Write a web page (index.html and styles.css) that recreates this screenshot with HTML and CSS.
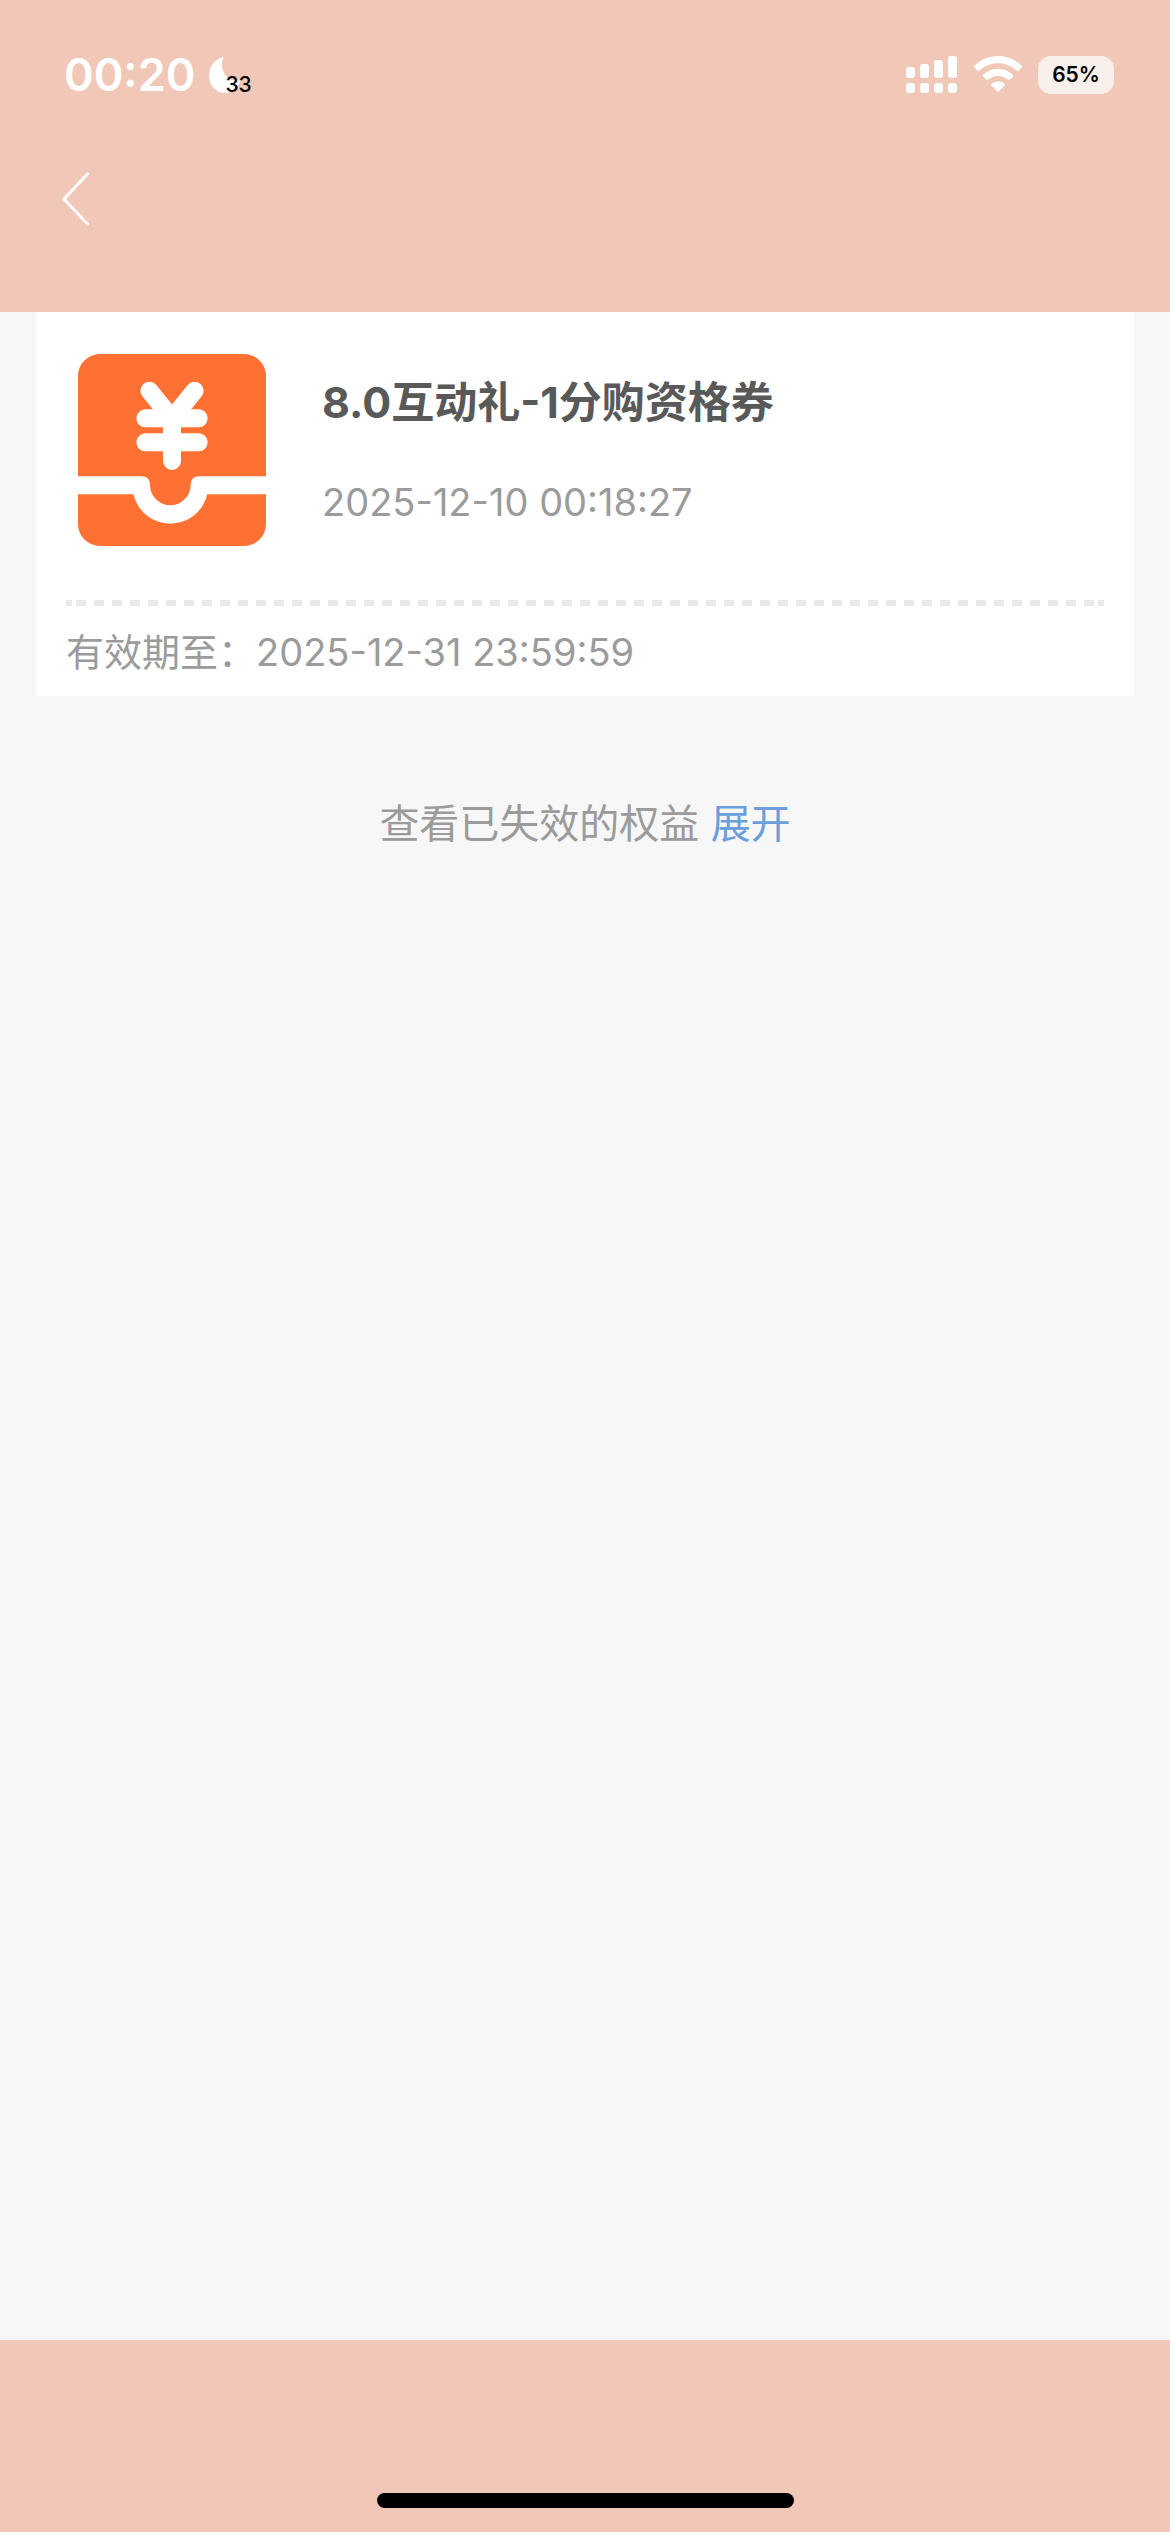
FILE: index.html
```
<!DOCTYPE html>
<html lang="zh-CN">
<head>
    <meta charset="UTF-8">
    <meta name="viewport" content="width=device-width, initial-scale=1.0">
    <title>我的权益</title>
    <link rel="stylesheet" href="styles.css">
</head>
<body>

    <!-- Header -->
    <header class="header">
        <div class="status-bar">
            <div class="status-left">
                <span class="time">00:20</span>
                <span class="focus">
                    <svg class="moon" viewBox="0 0 32 36" aria-hidden="true">
                        <path d="M13.6 0C14.2-.1 14.6.4 14.3 1 12.6 5 12.5 9.500 14 14c2.500 6.500 8.500 10.500 16 9.500l1.500.5C28.500 31 23 36 16 36 7 36 0 28.500 0 18.500 0 10 5.500 2.500 13.600 0z" fill="#fff"/>
                    </svg>
                    <span class="focus-count">33</span>
                </span>
            </div>
            <div class="status-right">
                <svg class="signal" viewBox="0 0 52 38" fill="#fff" aria-hidden="true">
                    <rect x="0" y="11" width="9" height="11" rx="3"/>
                    <rect x="14" y="8" width="9" height="14" rx="3"/>
                    <rect x="28" y="4" width="9" height="18" rx="3"/>
                    <rect x="42" y="0" width="9" height="22" rx="3"/>
                    <rect x="0" y="27" width="9" height="10" rx="3"/>
                    <rect x="14" y="27" width="9" height="10" rx="3"/>
                    <rect x="28" y="27" width="9" height="10" rx="3"/>
                    <rect x="42" y="27" width="9" height="10" rx="3"/>
                </svg>
                <svg class="wifi" viewBox="0 0 48 38" fill="#fff" aria-hidden="true">
                    <path d="M24 0C15 0 7 3.500.6 9.600c-.8.8-.8 1.500 0 2.200l2.700 2.700c.7.700 1.400.7 2.100 0C10.500 9.800 17 7.200 24 7.200s13.500 2.600 18.600 7.300c.7.700 1.400.7 2.100 0l2.700-2.700c.8-.7.8-1.400 0-2.200C41 3.500 33 0 24 0z"/>
                    <path d="M24 12.800c-5.600 0-10.800 2.200-14.700 5.800-.7.700-.7 1.400 0 2.100l2.900 2.900c.6.600 1.300.6 2 0 2.600-2.300 6-3.700 9.800-3.700s7.200 1.400 9.800 3.700c.7.600 1.400.6 2 0l2.900-2.900c.7-.7.7-1.400 0-2.100-3.900-3.600-9.100-5.800-14.700-5.800z"/>
                    <path d="M24 25.500c-2.400 0-4.600.9-6.300 2.300-.7.600-.7 1.300-.1 1.900l5.400 5.600c.6.600 1.400.6 2 0l5.400-5.600c.6-.6.6-1.300-.1-1.900-1.700-1.400-3.900-2.300-6.300-2.300z"/>
                </svg>
                <span class="battery">65%</span>
            </div>
        </div>
        <nav class="nav-bar">
            <button class="back-btn" type="button" aria-label="返回">
                <svg class="back-icon" viewBox="0 0 28 54" aria-hidden="true">
                    <path d="M25.500 2L2 27l23.500 25" fill="none" stroke="#fff" stroke-width="3" stroke-linecap="round"/>
                </svg>
            </button>
        </nav>
    </header>

    <!-- Coupon list -->
    <main class="content">
        <article class="coupon">
            <div class="coupon-main">
                <svg class="coupon-icon" viewBox="0 0 564 576" aria-hidden="true">
                    <path d="M66 0H498A66 66 0 0 1 564 66V367H364Q338 367 338 393A61 61 0 0 1 216 393Q216 367 190 367H0V66A66 66 0 0 1 66 0z" fill="#ff7033"/>
                    <path d="M0 421H166A114 114 0 0 0 388 421H564V510A66 66 0 0 1 498 576H66A66 66 0 0 1 0 510z" fill="#ff7033"/>
                    <path d="M214 110L282 194L350 110M202 193H362M202 265H362M282 190V321" fill="none" stroke="#fff" stroke-width="54" stroke-linecap="round"/>
                </svg>
                <div class="coupon-info">
                    <h2 class="coupon-title">8.0互动礼-1分购资格券</h2>
                    <p class="coupon-time">2025-12-10 00:18:27</p>
                </div>
            </div>
            <div class="divider"></div>
            <p class="coupon-expiry">有效期至：2025-12-31 23:59:59</p>
        </article>

        <p class="expired">查看已失效的权益 <button class="expand-btn" type="button">展开</button></p>
    </main>

    <!-- Bottom bar -->
    <footer class="footer">
        <div class="home-indicator"></div>
    </footer>

</body>
</html>
```
FILE: styles.css
```
* {
    box-sizing: border-box;
}

body {
    display: flex;
    flex-direction: column;
    min-height: 100vh;
    margin: 0;
    background-color: #f7f7f7;
    color: #9b9b9b;
    font-family: Inter, "Noto Sans CJK SC", sans-serif;
}

h2, p {
    margin: 0;
    font-weight: normal;
}

button {
    padding: 0;
    border: none;
    background: none;
    font: inherit;
    cursor: pointer;
}

svg {
    display: block;
}

.header {
    height: 312px;
    background-color: #f1c8b7;
}

.status-bar {
    display: flex;
    justify-content: space-between;
    align-items: center;
    height: 150px;
    padding: 0 56px 0 64px;
}

.status-left, .status-right {
    display: flex;
    align-items: center;
}

.status-left {
    gap: 14px;
}

.time {
    color: #fff;
    font-size: 45px;
    font-weight: 600;
    line-height: 60px;
}

.focus {
    position: relative;
}

.moon {
    width: 32px;
    height: 36px;
}

/* Count sits over the lower right part of the moon */
.focus-count {
    position: absolute;
    left: 16px;
    bottom: -4px;
    color: #000;
    font-size: 21px;
    font-weight: 500;
    line-height: 24px;
}

.status-right {
    gap: 16px;
}

.signal {
    width: 52px;
    height: 38px;
}

.wifi {
    width: 48px;
    height: 38px;
}

.battery {
    width: 76px;
    border-radius: 13px;
    background-color: #faf0eb;
    color: #000;
    font-size: 21px;
    font-weight: 600;
    line-height: 38px;
    text-align: center;
}

.nav-bar {
    padding: 22px 62px;
}

.back-btn {
    display: block;
}

.back-icon {
    width: 28px;
    height: 54px;
}

.content {
    flex: 1;
    padding: 0 36px;
}

.coupon {
    padding: 42px 30px 14px;
    background-color: #fff;
}

.coupon-main {
    display: flex;
    gap: 56px;
    padding: 0 12px 54px;
}

.coupon-icon {
    flex: none;
    width: 188px;
    height: 192px;
}

.coupon-info {
    display: flex;
    flex-direction: column;
    gap: 40px;
    padding-top: 18px;
}

.coupon-title {
    color: #595959;
    font-size: 43px;
    font-weight: bold;
    line-height: 60px;
}

.coupon-time, .coupon-expiry {
    font-size: 38px;
    line-height: 60px;
}

.divider {
    height: 6px;
    background-image:
        linear-gradient(#e8e8e8, #e8e8e8),
        linear-gradient(#e8e8e8, #e8e8e8),
        repeating-linear-gradient(90deg, #e8e8e8 0 10px, transparent 10px 18px);
    background-position: left, right, 10px 0;
    background-repeat: no-repeat;
    background-size: 6px 6px, 6px 6px, calc(100% - 20px) 6px;
}

.coupon-expiry {
    padding-top: 16px;
}

.expired {
    padding: 98px 0;
    font-size: 40px;
    line-height: 60px;
    text-align: center;
}

.expand-btn {
    color: #6a9fdc;
}

.footer {
    display: flex;
    justify-content: center;
    align-items: flex-end;
    height: 192px;
    padding-bottom: 24px;
    background-color: #f1c8b7;
}

.home-indicator {
    width: 417px;
    height: 15px;
    border-radius: 8px;
    background-color: #000;
}
```
